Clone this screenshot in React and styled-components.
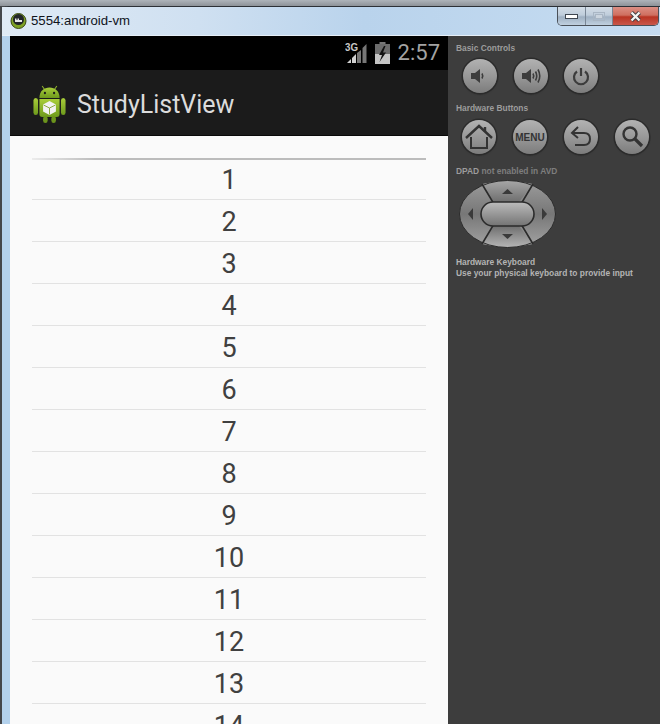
import styled, { createGlobalStyle } from "styled-components";

const GlobalStyle = createGlobalStyle`
  html, body {
    margin: 0;
    padding: 0;
    background: #3a3d42;
  }
`;

const Page = styled.div`
  width: 660px;
  height: 724px;
  overflow: hidden;
  display: flex;
  flex-direction: column;
  background: #44474b;
  font-family: "Liberation Sans", Arial, sans-serif;
`;

const BehindStrip = styled.div`
  height: 6px;
  flex: none;
  background: linear-gradient(#aeb4ba, #8d9298);
`;

const Window = styled.div`
  flex: 1;
  min-height: 0;
  margin-left: 2px;
  display: flex;
  flex-direction: column;
  border-top: 1px solid #2c3036;
  border-top-left-radius: 6px;
  background: #b3d1ec;
`;

const TitleBar = styled.div`
  height: 28px;
  flex: none;
  display: flex;
  justify-content: space-between;
  align-items: flex-start;
  background: linear-gradient(90deg, #dfeaf5 0%, #cfe0f1 30%, #b9d3ec 55%, #c6dcf1 100%);
  border-bottom: 1px solid #e6eff8;
`;

const TitleLeft = styled.div`
  display: flex;
  align-items: center;
  gap: 4px;
  margin: 6px 0 0 8px;
`;

const TitleText = styled.span`
  font-family: "Liberation Sans", sans-serif;
  font-size: 13.2px;
  color: #10141c;
  line-height: 16px;
`;

const Controls = styled.div`
  display: flex;
  height: 18px;
  margin-right: 1px;
  border: 1px solid #4a5058;
  border-top: none;
  border-radius: 0 0 5px 5px;
  overflow: hidden;
`;

const ControlButton = styled.div`
  box-sizing: border-box;
  width: ${(p) => p.$w}px;
  display: flex;
  align-items: center;
  justify-content: center;
  border-left: ${(p) => (p.$first ? "none" : "1px solid #7a8796")};
  background: ${(p) =>
    p.$close
      ? "linear-gradient(#dc8f84 0%, #cf6f60 45%, #b93423 55%, #c9574a 100%)"
      : "linear-gradient(#d3dde7 0%, #bfcddb 45%, #9fb0c2 55%, #c0d0df 100%)"};
`;

const MinGlyph = styled.div`
  width: 11px;
  height: 3px;
  background: #fff;
  border: 1px solid #3e4650;
`;

const MaxGlyph = styled.div`
  width: 12px;
  height: 9px;
  box-sizing: border-box;
  border: 1px solid #a9b6c4;
  display: flex;
  align-items: center;
  justify-content: center;

  &::after {
    content: "";
    width: 6px;
    height: 3px;
    border: 1px solid #a9b6c4;
    background: #cbd5df;
  }
`;

const Body = styled.div`
  flex: 1;
  min-height: 0;
  margin-left: 8px;
  display: flex;
`;

const Screen = styled.div`
  width: 438px;
  flex: none;
  display: flex;
  flex-direction: column;
  background: #fafafa;
`;

const StatusBar = styled.div`
  height: 34px;
  flex: none;
  background: #000;
  display: flex;
  align-items: center;
  justify-content: flex-end;
  gap: 7px;
  padding-right: 8px;
`;

const Clock = styled.span`
  font-family: Roboto, sans-serif;
  font-size: 22px;
  color: #a3a3a3;
  line-height: 36px;
  margin-left: 1px;
`;

const ActionBar = styled.div`
  height: 65px;
  flex: none;
  display: flex;
  align-items: center;
  gap: 11px;
  padding-left: 23px;
  background: #1b1b1b;
  border-bottom: 1px solid #0a0a0a;
`;

const AppName = styled.span`
  font-family: Roboto, sans-serif;
  font-size: 25px;
  color: #dcdcdc;
  padding-top: 3px;
`;

const List = styled.div`
  padding: 22px 22px 0;
  flex: 1;
  min-height: 0;
  overflow: hidden;
`;

const TopDivider = styled.div`
  height: 2px;
  margin-bottom: -2px;
  background: linear-gradient(90deg, #ececec 0%, #bcbcbc 16%, #bcbcbc 100%);
`;

const Row = styled.div`
  height: 41px;
  border-bottom: 1px solid #e2e2e2;
  text-align: center;
  font-family: Roboto, sans-serif;
  font-size: 27px;
  line-height: 44px;
  color: #404040;
`;

const Panel = styled.div`
  flex: 1;
  background: #3d3d3d;
  padding: 7px 0 0 8px;
  display: flex;
  flex-direction: column;
`;

const Label = styled.div`
  font-size: 8.4px;
  font-weight: 700;
  line-height: 11px;
  color: ${(p) => (p.$light ? "#b4b4b4" : "#9c9c9c")};
`;

const Dim = styled.span`
  color: #7e7e7e;
`;

const RoundRow = styled.div`
  display: flex;
  gap: ${(p) => p.$gap}px;
  margin: ${(p) => p.$top}px 0 ${(p) => p.$bottom}px ${(p) => p.$left}px;
`;

const RoundButton = styled.div`
  width: 34px;
  height: 34px;
  border-radius: 50%;
  flex: none;
  display: flex;
  align-items: center;
  justify-content: center;
  background: linear-gradient(#b2b2b2 0%, #969696 55%, #7c7c7c 100%);
  box-shadow: 0 0 0 1.5px #2b2b2b, 0 1px 2px #222;
  font-size: 10px;
  font-weight: 700;
  color: #333;
`;

const DpadWrap = styled.div`
  margin: 3px 0 9px 3px;
  line-height: 0;
`;

const AppIcon = () => (
  <svg width="17" height="16" viewBox="0 0 17 16">
    <circle cx="8.5" cy="8" r="7.5" fill="#7fa324" stroke="#3c4a16" />
    <circle cx="8.5" cy="6.5" r="5.5" fill="#23262a" />
    <rect x="5" y="7" width="7" height="2" fill="#e8e8e8" />
    <rect x="5" y="5.5" width="1.5" height="1.5" fill="#e8e8e8" />
    <rect x="7.5" y="5.5" width="1.5" height="1.5" fill="#e8e8e8" />
  </svg>
);

const CloseIcon = () => (
  <svg width="13" height="11" viewBox="0 0 13 11">
    <path d="M2.5 1.5 L10.5 9.5 M10.5 1.5 L2.5 9.5" stroke="#3c3c40" strokeWidth="4" />
    <path d="M2.5 1.5 L10.5 9.5 M10.5 1.5 L2.5 9.5" stroke="#f4f4f4" strokeWidth="2.4" />
  </svg>
);

const SignalIcon = () => (
  <svg width="23" height="24" viewBox="0 0 23 24">
    <text x="0" y="10" fontSize="11" fontWeight="700" textLength="13" lengthAdjust="spacingAndGlyphs" fontFamily="Liberation Sans" fill="#c8c8c8">3G</text>
    <path d="M2 22 L6 22 L6 18 Z" fill="#d0d0d0" />
    <path d="M7 22 L11 22 L11 13 L7 17 Z" fill="#d0d0d0" />
    <path d="M12 22 L16 22 L16 9 L12 12 Z" fill="#777" />
    <path d="M17.5 22 L21.5 22 L21.5 3 L17.5 7 Z" fill="#777" />
  </svg>
);

const BatteryIcon = () => (
  <svg width="15" height="22" viewBox="0 0 15 22">
    <rect x="4.5" y="0" width="6" height="2" fill="#777" />
    <rect x="0" y="2" width="15" height="10" fill="#6c6c6c" />
    <rect x="0" y="12" width="15" height="10" fill="#c4c4c4" />
    <path d="M9 4 L4 13 L7 13 L4.5 20 L11 10.5 L8 10.5 L10.5 4 Z" fill="#111" />
  </svg>
);

const AndroidIcon = () => (
  <svg width="33" height="40" viewBox="0 0 36 40" preserveAspectRatio="none">
    <defs>
      <linearGradient id="droid" x1="0" y1="0" x2="0" y2="1">
        <stop offset="0" stopColor="#a9ce3a" />
        <stop offset="1" stopColor="#6e9a1c" />
      </linearGradient>
    </defs>
    <path d="M10 3 L13 7 M26 3 L23 7" stroke="#8cae2c" strokeWidth="1.2" />
    <path d="M7 15 C7 8 12 4.5 18 4.5 C24 4.5 29 8 29 15 Z" fill="url(#droid)" />
    <circle cx="13" cy="10" r="1.2" fill="#1b1b1b" />
    <circle cx="23" cy="10" r="1.2" fill="#1b1b1b" />
    <rect x="0.5" y="15" width="5" height="17" rx="2.5" fill="url(#droid)" />
    <rect x="30.5" y="15" width="5" height="17" rx="2.5" fill="url(#droid)" />
    <path d="M7 16 H29 V31 Q29 34 26 34 H10 Q7 34 7 31 Z" fill="url(#droid)" />
    <rect x="11" y="33" width="5" height="7" rx="2.5" fill="#6c941c" />
    <rect x="20" y="33" width="5" height="7" rx="2.5" fill="#6c941c" />
    <path d="M18 18 L25 21.5 V28.5 L18 32 L11 28.5 V21.5 Z" fill="#f2f2f2" />
    <path d="M11.5 22 L18 25 L24.5 22 M18 25 V31.5" stroke="#8aa83a" strokeWidth="1" fill="none" />
  </svg>
);

const VolumeIcon = ({ waves }) => (
  <svg width="22" height="20" viewBox="0 0 22 20">
    <path d="M2 7 H6 L11 3 V17 L6 13 H2 Z" fill="#3c3c3c" />
    <path d="M13 7.5 Q14.5 10 13 12.5" stroke="#3c3c3c" strokeWidth="1.6" fill="none" />
    {waves && <path d="M15.5 5.5 Q18 10 15.5 14.5" stroke="#3c3c3c" strokeWidth="1.6" fill="none" />}
    {waves && <path d="M18 3.5 Q21.5 10 18 16.5" stroke="#3c3c3c" strokeWidth="1.6" fill="none" />}
  </svg>
);

const PowerIcon = () => (
  <svg width="20" height="20" viewBox="0 0 20 20">
    <path d="M6 5.5 A7 7 0 1 0 14 5.5" stroke="#3c3c3c" strokeWidth="2.2" fill="none" />
    <path d="M10 2 V10" stroke="#3c3c3c" strokeWidth="2.2" />
  </svg>
);

const HomeIcon = () => (
  <svg width="30" height="28" viewBox="0 0 30 28">
    <path d="M2 15 L15 3 L28 15" stroke="#333" strokeWidth="2.4" fill="none" />
    <path d="M21 4 V9" stroke="#333" strokeWidth="2.4" />
    <path d="M7 14 V25 H23 V14" stroke="#333" strokeWidth="2" fill="none" />
  </svg>
);

const BackIcon = () => (
  <svg width="24" height="24" viewBox="0 0 24 24">
    <path d="M9 2 L3 8 L9 13" stroke="#333" strokeWidth="2" fill="none" />
    <path d="M3 8 H15 Q21 8 21 14 Q21 20 15 20 H6" stroke="#333" strokeWidth="2" fill="none" />
  </svg>
);

const SearchIcon = () => (
  <svg width="24" height="24" viewBox="0 0 24 24">
    <circle cx="10" cy="9" r="6.5" stroke="#333" strokeWidth="2.4" fill="none" />
    <path d="M15 14 L22 21" stroke="#333" strokeWidth="3.2" />
  </svg>
);

const Dpad = () => (
  <svg width="97" height="68" viewBox="0 0 97 68">
    <defs>
      <linearGradient id="padUp" x1="0" y1="0" x2="0" y2="1">
        <stop offset="0" stopColor="#a6a6a6" />
        <stop offset="1" stopColor="#6e6e6e" />
      </linearGradient>
      <linearGradient id="padDown" x1="0" y1="0" x2="0" y2="1">
        <stop offset="0" stopColor="#6f6f6f" />
        <stop offset="1" stopColor="#b4b4b4" />
      </linearGradient>
      <linearGradient id="padSide" x1="0" y1="0" x2="0" y2="1">
        <stop offset="0" stopColor="#9c9c9c" />
        <stop offset="0.5" stopColor="#777" />
        <stop offset="1" stopColor="#a4a4a4" />
      </linearGradient>
      <linearGradient id="padMid" x1="0" y1="0" x2="0" y2="1">
        <stop offset="0" stopColor="#bcbcbc" />
        <stop offset="1" stopColor="#737373" />
      </linearGradient>
    </defs>
    <ellipse cx="48.5" cy="34" rx="48" ry="33.5" fill="url(#padSide)" />
    <path d="M23 4 Q48 -2 74 4 L60 22 H35 Z" fill="url(#padUp)" />
    <path d="M23 64 Q48 70 74 64 L60 46 H35 Z" fill="url(#padDown)" />
    <path d="M23 4 L35 24 M74 4 L62 24 M23 64 L35 44 M74 64 L62 44" stroke="#2b2b2b" strokeWidth="1.6" />
    <ellipse cx="48.5" cy="34" rx="48" ry="33.5" fill="none" stroke="#2b2b2b" strokeWidth="1" />
    <rect x="22" y="22" width="53" height="24" rx="12" fill="url(#padMid)" stroke="#2b2b2b" strokeWidth="1.6" />
    <path d="M48.5 9 L54 14 H43 Z" fill="#3a3a3a" />
    <path d="M48.5 59 L54 54 H43 Z" fill="#3a3a3a" />
    <path d="M9 34 L14 28 V40 Z" fill="#3a3a3a" />
    <path d="M88 34 L83 28 V40 Z" fill="#3a3a3a" />
  </svg>
);

const rows = Array.from({ length: 14 }, (_, i) => i + 1);

const App = () => {
  return (
    <>
      <GlobalStyle />
      <Page>
        <BehindStrip />
        <Window>
          <TitleBar>
            <TitleLeft>
              <AppIcon />
              <TitleText>5554:android-vm</TitleText>
            </TitleLeft>
            <Controls>
              <ControlButton $w={27} $first>
                <MinGlyph />
              </ControlButton>
              <ControlButton $w={27}>
                <MaxGlyph />
              </ControlButton>
              <ControlButton $w={46} $close>
                <CloseIcon />
              </ControlButton>
            </Controls>
          </TitleBar>
          <Body>
            <Screen>
              <StatusBar>
                <SignalIcon />
                <BatteryIcon />
                <Clock>2:57</Clock>
              </StatusBar>
              <ActionBar>
                <AndroidIcon />
                <AppName>StudyListView</AppName>
              </ActionBar>
              <List>
                <TopDivider />
                {rows.map((n) => (
                  <Row key={n}>{n}</Row>
                ))}
              </List>
            </Screen>
            <Panel>
              <Label>Basic Controls</Label>
              <RoundRow $gap={16.5} $top={5} $left={7} $bottom={10}>
                <RoundButton><VolumeIcon /></RoundButton>
                <RoundButton><VolumeIcon waves /></RoundButton>
                <RoundButton><PowerIcon /></RoundButton>
              </RoundRow>
              <Label>Hardware Buttons</Label>
              <RoundRow $gap={17} $top={6} $left={6} $bottom={12}>
                <RoundButton><HomeIcon /></RoundButton>
                <RoundButton>MENU</RoundButton>
                <RoundButton><BackIcon /></RoundButton>
                <RoundButton><SearchIcon /></RoundButton>
              </RoundRow>
              <Label>DPAD <Dim>not enabled in AVD</Dim></Label>
              <DpadWrap><Dpad /></DpadWrap>
              <Label $light>Hardware Keyboard</Label>
              <Label $light>Use your physical keyboard to provide input</Label>
            </Panel>
          </Body>
        </Window>
      </Page>
    </>
  );
};

export default App;
